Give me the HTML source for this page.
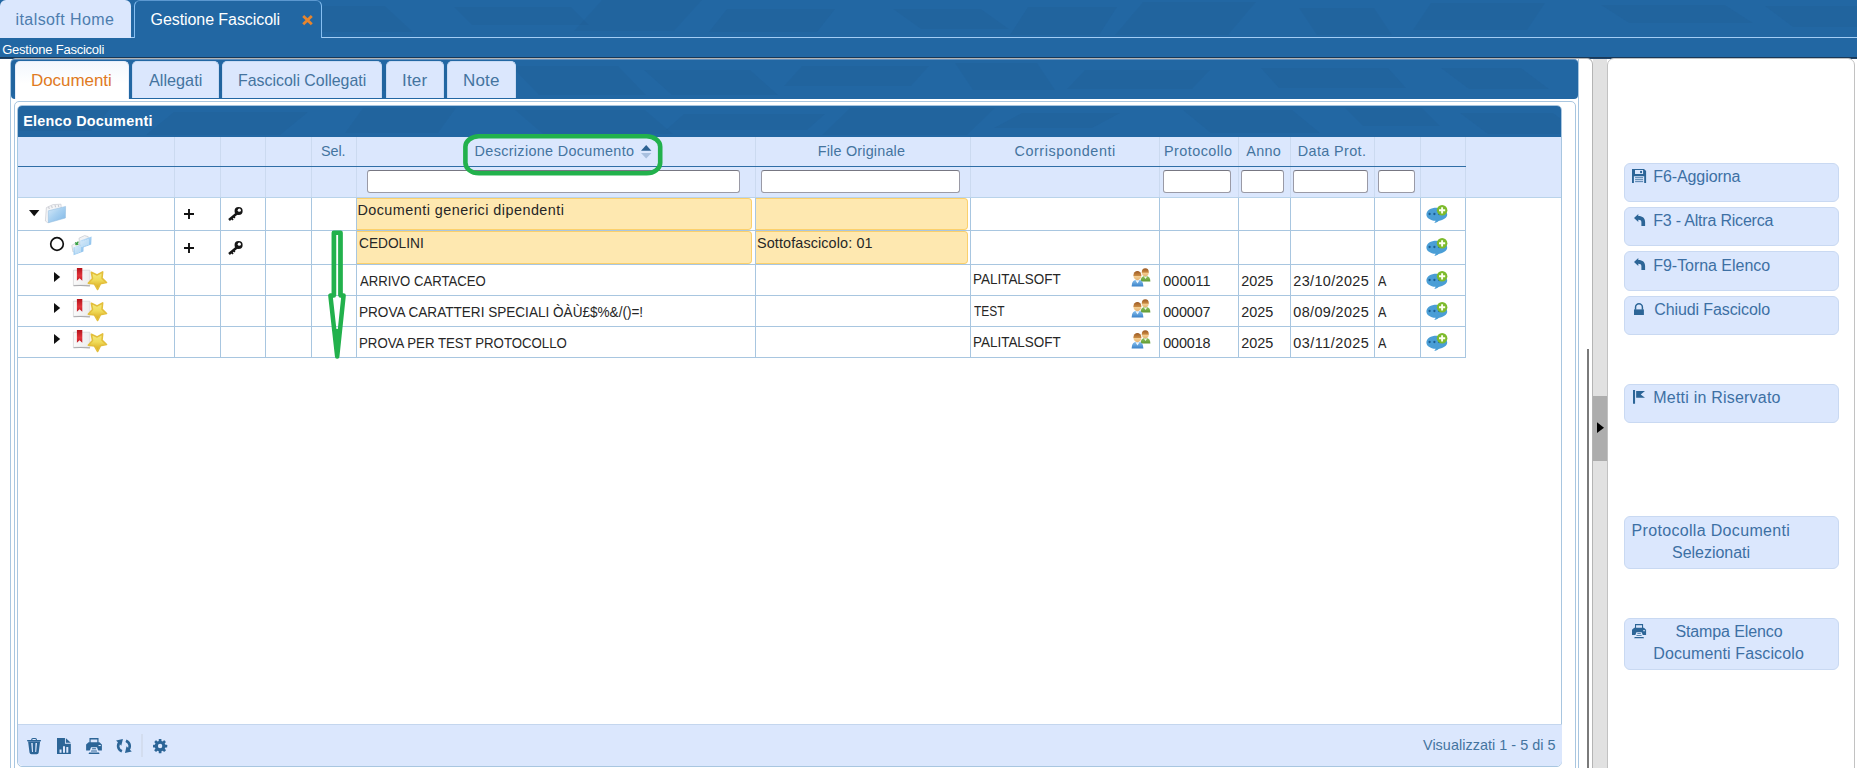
<!DOCTYPE html>
<html lang="it">
<head>
<meta charset="utf-8">
<title>Gestione Fascicoli</title>
<style>
html,body{margin:0;padding:0;}
body{width:1857px;height:768px;overflow:hidden;background:#fff;position:relative;
 font-family:"Liberation Sans",sans-serif;font-size:14.4px;}
.abs,.t,svg.i{position:absolute;}
.t{white-space:nowrap;display:block;}
svg.i{overflow:visible;}
#hdr{left:0;top:0;width:1857px;height:57px;background:#2267a3;}
#hdr-shadow{left:0;top:57px;width:1857px;height:2px;background:linear-gradient(#15324f,#244a70);}
.toptab{box-sizing:border-box;border-radius:6px 6px 0 0;}
#tab-home{left:0;top:0;width:131px;height:38px;background:#dbe7fd;}
#tab-active{left:134px;top:0;width:188px;height:38px;border:1px solid #86bff2;border-top-color:#5c98d0;border-bottom:0;background:#2267a3;}
.hline{height:1px;top:37px;background:#a3cdf5;}
#leftpane{left:10px;top:58px;width:1583px;height:720px;box-sizing:border-box;border:1px solid #b4b4b4;border-left-color:#a8c6e0;border-radius:6px;background:#fff;}
#tabswidget{left:11px;top:59px;width:1568px;height:720px;box-sizing:border-box;border-right:1px solid #a8c6e0;}
#tabbar{left:11px;top:59px;width:1567px;height:40px;background:#2267a3;border-radius:4px;box-sizing:border-box;border-top:1px solid #5f8fbf;}
.tab{box-sizing:border-box;top:61px;height:37px;background:#dbe7fd;border-radius:5px 5px 0 0;border:1px solid #c9dbf4;border-bottom:0;}
.tab.on{background:linear-gradient(#f3f7fd,#ffffff 60%);height:38px;border-color:#e7eefb;}
#tabpanel{left:14px;top:101px;width:1562px;height:700px;box-sizing:border-box;border:1px solid #a8c6e0;border-radius:5px;}
#grid{left:17px;top:105px;width:1545px;height:662px;box-sizing:border-box;border:1px solid #a8c6e0;border-radius:5px;overflow:hidden;background:#fff;}
#gtitle{left:18px;top:106px;width:1543px;height:31px;background:#2267a3;border-radius:4px 4px 0 0;}
#ghead{left:18px;top:137px;width:1543px;height:60px;background:#dbe7fd;}
#gheadline{left:18px;top:166px;width:1448px;height:1px;background:#2f6ea6;}
#gbodytop{left:18px;top:197px;width:1543px;height:1px;background:#b9d3ea;}
.hsep{top:137px;width:1px;height:60px;background:#cbdaf0;}
.vsep{top:198px;width:1px;height:160px;background:#a8c6e0;}
.rsep{left:18px;width:1448px;height:1px;background:#a8c6e0;}
.inp{box-sizing:border-box;top:170px;height:23px;background:#fff;border:1px solid #9a9aa6;border-top-color:#777782;border-radius:3px;}
.ycell{box-sizing:border-box;background:#fee8b0;border:1.5px solid #fbd06c;border-left:0;border-radius:0 4px 4px 0;}
#pager{left:18px;top:724px;width:1544px;height:42px;box-sizing:border-box;background:#dbe7fd;border-top:1px solid #c4d6ee;border-radius:0 0 5px 5px;}
#psep{left:141px;top:734px;width:2px;height:23px;background:#d3ddef;}
#scrollline{left:1587px;top:349px;width:2px;height:420px;background:#7a7a7a;}
#splitter{left:1593px;top:59px;width:14px;height:720px;background:#e1e1e1;}
#handle{left:1593px;top:396px;width:14px;height:65px;background:#adadad;}
#rightpane{left:1607px;top:58px;width:248px;height:730px;box-sizing:border-box;border:1px solid #c2c2c2;border-radius:7px;background:#fff;}
.btn{box-sizing:border-box;left:1624px;width:215px;background:#dbe7fd;border:1px solid #c9d9f2;border-radius:6px;}
</style>
</head>
<body>
<div id="hdr" class="abs"></div>
<svg class="i" style="left:0px;top:0px;overflow:hidden" width="1857" height="37"><g fill="#1d3f66" fill-opacity="0.075"><polygon points="0,2 77,2 49,29 -28,29"/><polygon points="130,7 250,7 278,23 158,23"/><polygon points="276,6 385,6 413,32 304,32"/><polygon points="454,7 571,7 589,25 472,25"/><polygon points="602,0 702,0 674,31 574,31"/><polygon points="727,9 835,9 817,32 709,32"/><polygon points="893,9 981,9 1009,29 921,29"/><polygon points="1028,7 1117,7 1099,35 1010,35"/><polygon points="1143,2 1256,2 1228,35 1115,35"/><polygon points="1299,8 1374,8 1392,35 1317,35"/><polygon points="1431,3 1545,3 1527,30 1413,30"/><polygon points="1601,5 1725,5 1753,23 1629,23"/><polygon points="1765,6 1876,6 1904,27 1793,27"/></g></svg>
<div id="hdr-shadow" class="abs"></div>
<div class="abs hline" style="left:131px;width:4px"></div><div class="abs hline" style="left:321px;width:1536px"></div>
<div id="tab-home" class="abs toptab"></div><span class="t " style="left:15.50px;top:8.96px;font-size:16px;line-height:21px;color:#4d7dae;letter-spacing:0.419px;">italsoft Home</span>
<div id="tab-active" class="abs toptab"></div><span class="t " style="left:150.50px;top:8.96px;font-size:16px;line-height:21px;color:#ffffff;letter-spacing:-0.068px;">Gestione Fascicoli</span>
<svg class="i" style="left:302.00px;top:14.75px" width="11" height="10.4"><path d="M1.2 1.1L9.8 9.3M9.8 1.1L1.2 9.3" stroke="#e8852d" stroke-width="2.8" fill="none"/></svg>
<span class="t " style="left:2.20px;top:40.60px;font-size:13px;line-height:17px;color:#ffffff;letter-spacing:-0.237px;">Gestione Fascicoli</span>
<div id="leftpane" class="abs"></div>
<div id="rightpane" class="abs"></div>
<div id="splitter" class="abs"></div><div id="handle" class="abs"></div>
<svg class="i" style="left:1597px;top:422px" width="8" height="12"><polygon points="0,0.3 7,5.7 0,11.1" fill="#000"/></svg>
<div id="scrollline" class="abs"></div>
<div id="tabswidget" class="abs"></div>
<div id="tabbar" class="abs"></div>
<svg class="i" style="left:12px;top:61px;overflow:hidden" width="1565" height="37"><g fill="#1d3f66" fill-opacity="0.075"><polygon points="0,1 67,1 39,33 -28,33"/><polygon points="134,6 233,6 251,30 152,30"/><polygon points="295,9 442,9 424,30 277,30"/><polygon points="499,5 606,5 634,34 527,34"/><polygon points="632,9 738,9 766,34 660,34"/><polygon points="790,5 917,5 899,25 772,25"/><polygon points="943,2 1025,2 1043,29 961,29"/><polygon points="1073,9 1198,9 1180,28 1055,28"/><polygon points="1249,7 1376,7 1394,27 1267,27"/><polygon points="1429,7 1509,7 1537,28 1457,28"/><polygon points="1567,3 1658,3 1686,29 1595,29"/></g></svg>
<div class="abs tab on" style="left:15px;width:113.5px"></div><span class="t " style="left:31.00px;top:70.01px;font-size:17px;line-height:22px;color:#e07a1e;letter-spacing:-0.060px;">Documenti</span>
<div class="abs tab" style="left:132px;width:87px"></div><span class="t " style="left:149.00px;top:70.01px;font-size:17px;line-height:22px;color:#44749f;transform:scaleX(0.9549);transform-origin:0 0;">Allegati</span>
<div class="abs tab" style="left:222px;width:160px"></div><span class="t " style="left:238.06px;top:70.01px;font-size:17px;line-height:22px;color:#44749f;transform:scaleX(0.9363);transform-origin:0 0;">Fascicoli Collegati</span>
<div class="abs tab" style="left:386px;width:58px"></div><span class="t " style="left:402.00px;top:70.01px;font-size:17px;line-height:22px;color:#44749f;letter-spacing:0.200px;">Iter</span>
<div class="abs tab" style="left:447px;width:69px"></div><span class="t " style="left:463.00px;top:70.01px;font-size:17px;line-height:22px;color:#44749f;letter-spacing:0.182px;">Note</span>
<div id="tabpanel" class="abs"></div>
<div id="grid" class="abs"></div>
<div id="gtitle" class="abs"></div>
<svg class="i" style="left:19px;top:107px;overflow:hidden" width="1541" height="30"><g fill="#1d3f66" fill-opacity="0.075"><polygon points="0,3 90,3 72,24 -18,24"/><polygon points="155,5 289,5 261,28 127,28"/><polygon points="344,1 437,1 419,26 326,26"/><polygon points="496,3 626,3 654,27 524,27"/><polygon points="665,7 806,7 788,23 647,23"/><polygon points="831,1 976,1 948,28 803,28"/><polygon points="1003,6 1101,6 1073,21 975,21"/><polygon points="1164,3 1273,3 1301,26 1192,26"/><polygon points="1326,1 1403,1 1421,19 1344,19"/><polygon points="1441,6 1534,6 1562,27 1469,27"/><polygon points="1585,4 1709,4 1737,24 1613,24"/></g></svg>
<span class="t " style="left:23.20px;top:111.51px;font-size:14.4px;line-height:19px;color:#ffffff;letter-spacing:0.251px;font-weight:700;">Elenco Documenti</span>
<div id="ghead" class="abs"></div>
<div class="abs hsep" style="left:174px"></div>
<div class="abs hsep" style="left:220px"></div>
<div class="abs hsep" style="left:265px"></div>
<div class="abs hsep" style="left:311px"></div>
<div class="abs hsep" style="left:356px"></div>
<div class="abs hsep" style="left:755px"></div>
<div class="abs hsep" style="left:970px"></div>
<div class="abs hsep" style="left:1159px"></div>
<div class="abs hsep" style="left:1238px"></div>
<div class="abs hsep" style="left:1290px"></div>
<div class="abs hsep" style="left:1374px"></div>
<div class="abs hsep" style="left:1420px"></div>
<div class="abs hsep" style="left:1465px"></div>
<div id="gheadline" class="abs"></div>
<span class="t " style="left:321.00px;top:141.51px;font-size:14.4px;line-height:19px;color:#44749f;letter-spacing:-0.100px;">Sel.</span>
<span class="t " style="left:474.60px;top:141.51px;font-size:14.4px;line-height:19px;color:#44749f;letter-spacing:0.332px;">Descrizione Documento</span>
<span class="t " style="left:817.75px;top:141.51px;font-size:14.4px;line-height:19px;color:#44749f;letter-spacing:0.190px;">File Originale</span>
<span class="t " style="left:1014.50px;top:141.51px;font-size:14.4px;line-height:19px;color:#44749f;letter-spacing:0.547px;">Corrispondenti</span>
<span class="t " style="left:1164.00px;top:141.51px;font-size:14.4px;line-height:19px;color:#44749f;letter-spacing:0.446px;">Protocollo</span>
<span class="t " style="left:1246.25px;top:141.51px;font-size:14.4px;line-height:19px;color:#44749f;letter-spacing:0.298px;">Anno</span>
<span class="t " style="left:1297.75px;top:141.51px;font-size:14.4px;line-height:19px;color:#44749f;letter-spacing:0.385px;">Data Prot.</span>
<svg class="i" style="left:641px;top:145px" width="11" height="14"><polygon points="5.2,0 10.4,5.7 0,5.7" fill="#2d6293"/><polygon points="0,8 10.4,8 5.2,13.6" fill="#a9c0df"/></svg>
<div class="abs inp" style="left:367px;width:373px"></div>
<div class="abs inp" style="left:761px;width:199px"></div>
<div class="abs inp" style="left:1163px;width:68px"></div>
<div class="abs inp" style="left:1241px;width:43px"></div>
<div class="abs inp" style="left:1293px;width:75px"></div>
<div class="abs inp" style="left:1378px;width:37px"></div>
<div id="gbodytop" class="abs"></div>
<div class="abs vsep" style="left:17px;top:137px;height:221px;background:#a6c9e2"></div>
<div class="abs vsep" style="left:174px"></div>
<div class="abs vsep" style="left:220px"></div>
<div class="abs vsep" style="left:265px"></div>
<div class="abs vsep" style="left:311px"></div>
<div class="abs vsep" style="left:356px"></div>
<div class="abs vsep" style="left:755px"></div>
<div class="abs vsep" style="left:970px"></div>
<div class="abs vsep" style="left:1159px"></div>
<div class="abs vsep" style="left:1238px"></div>
<div class="abs vsep" style="left:1290px"></div>
<div class="abs vsep" style="left:1374px"></div>
<div class="abs vsep" style="left:1420px"></div>
<div class="abs vsep" style="left:1465px"></div>
<div class="abs rsep" style="top:230px"></div>
<div class="abs rsep" style="top:264px"></div>
<div class="abs rsep" style="top:295px"></div>
<div class="abs rsep" style="top:326px"></div>
<div class="abs rsep" style="top:357px"></div>
<div class="abs ycell" style="left:357px;top:197.6px;width:395px;height:32.400000000000006px"></div>
<div class="abs ycell" style="left:756px;top:197.6px;width:212px;height:32.400000000000006px"></div>
<div class="abs ycell" style="left:357px;top:231px;width:395px;height:33px"></div>
<div class="abs ycell" style="left:756px;top:231px;width:212px;height:33px"></div>
<span class="t " style="left:357.40px;top:201.31px;font-size:14.4px;line-height:19px;color:#262626;letter-spacing:0.463px;">Documenti generici dipendenti</span>
<span class="t " style="left:358.60px;top:234.21px;font-size:14.4px;line-height:19px;color:#262626;transform:scaleX(0.9527);transform-origin:0 0;">CEDOLINI</span>
<span class="t " style="left:757.00px;top:234.31px;font-size:14.4px;line-height:19px;color:#262626;letter-spacing:0.112px;">Sottofascicolo: 01</span>
<span class="t " style="left:360.00px;top:271.76px;font-size:14.4px;line-height:19px;color:#262626;transform:scaleX(0.9120);transform-origin:0 0;">ARRIVO CARTACEO</span>
<span class="t " style="left:359.06px;top:302.81px;font-size:14.4px;line-height:19px;color:#262626;transform:scaleX(0.9429);transform-origin:0 0;">PROVA CARATTERI SPECIALI ÒÀÙ£$%&amp;/()=!</span>
<span class="t " style="left:359.08px;top:333.71px;font-size:14.4px;line-height:19px;color:#262626;transform:scaleX(0.9196);transform-origin:0 0;">PROVA PER TEST PROTOCOLLO</span>
<span class="t " style="left:973.31px;top:269.76px;font-size:14.4px;line-height:19px;color:#262626;transform:scaleX(0.9351);transform-origin:0 0;">PALITALSOFT</span>
<span class="t " style="left:974.25px;top:301.51px;font-size:14.4px;line-height:19px;color:#262626;transform:scaleX(0.8314);transform-origin:0 0;">TEST</span>
<span class="t " style="left:973.31px;top:332.71px;font-size:14.4px;line-height:19px;color:#262626;transform:scaleX(0.9351);transform-origin:0 0;">PALITALSOFT</span>
<span class="t " style="left:1163.25px;top:271.76px;font-size:14.4px;line-height:19px;color:#262626;letter-spacing:0.060px;">000011</span>
<span class="t " style="left:1241.25px;top:271.76px;font-size:14.4px;line-height:19px;color:#262626;letter-spacing:-0.003px;">2025</span>
<span class="t " style="left:1293.25px;top:271.76px;font-size:14.4px;line-height:19px;color:#262626;letter-spacing:0.387px;">23/10/2025</span>
<span class="t " style="left:1378.00px;top:271.76px;font-size:14.4px;line-height:19px;color:#262626;transform:scaleX(0.8750);transform-origin:0 0;">A</span>
<span class="t " style="left:1163.25px;top:302.86px;font-size:14.4px;line-height:19px;color:#262626;letter-spacing:-0.153px;">000007</span>
<span class="t " style="left:1241.25px;top:302.86px;font-size:14.4px;line-height:19px;color:#262626;letter-spacing:-0.003px;">2025</span>
<span class="t " style="left:1293.25px;top:302.86px;font-size:14.4px;line-height:19px;color:#262626;letter-spacing:0.387px;">08/09/2025</span>
<span class="t " style="left:1378.00px;top:302.86px;font-size:14.4px;line-height:19px;color:#262626;transform:scaleX(0.8750);transform-origin:0 0;">A</span>
<span class="t " style="left:1163.25px;top:333.96px;font-size:14.4px;line-height:19px;color:#262626;letter-spacing:-0.153px;">000018</span>
<span class="t " style="left:1241.25px;top:333.96px;font-size:14.4px;line-height:19px;color:#262626;letter-spacing:-0.003px;">2025</span>
<span class="t " style="left:1293.25px;top:333.96px;font-size:14.4px;line-height:19px;color:#262626;letter-spacing:0.505px;">03/11/2025</span>
<span class="t " style="left:1378.00px;top:333.96px;font-size:14.4px;line-height:19px;color:#262626;transform:scaleX(0.8750);transform-origin:0 0;">A</span>
<svg class="i" style="left:29px;top:210px" width="11" height="7"><polygon points="0,0 10.4,0 5.2,6.2" fill="#111"/></svg>
<svg class="i" style="left:45.00px;top:203.50px" width="21" height="19.5"><defs><linearGradient id="g1" x1="0" y1="0" x2="1" y2="1"><stop offset="0" stop-color="#d9ebf9"/><stop offset="0.45" stop-color="#a9d1f1"/><stop offset="1" stop-color="#7fb7e6"/></linearGradient></defs><path d="M1.4 3.6L8 0.6L16 0.2L16.6 12.5L2.6 18.6L0.4 17Z" fill="#f4f5f7" stroke="#c9ccd2" stroke-width="0.7"/><path d="M3.6 2.8L4.3 5M6.6 1.8L7.2 4M10 1L10.6 3.3M13.2 0.8L13.8 3" stroke="#b9bcc4" stroke-width="0.8"/><path d="M3.3 6.8L20.6 2.4L20.4 14L3.4 18.8Z" fill="url(#g1)" stroke="#8fb9dd" stroke-width="0.5"/></svg>
<svg class="i" style="left:49px;top:236px" width="16" height="16"><circle cx="8" cy="8" r="6.3" fill="#fff" stroke="#111" stroke-width="1.7"/></svg>
<svg class="i" style="left:70.50px;top:235.00px" width="21" height="20.5"><defs><linearGradient id="g2" x1="0" y1="0" x2="1" y2="1"><stop offset="0" stop-color="#d4e9fa"/><stop offset="0.5" stop-color="#a3cff2"/><stop offset="1" stop-color="#86bdea"/></linearGradient></defs><path d="M8 3.2L13.6 0.6L17.2 1.6L17.6 9L9 12.4Z" fill="#f2f3f5" stroke="#c4c8cf" stroke-width="0.7"/><path d="M9.2 5.4L20.6 1.6L20.2 9.6L9.6 13.4Z" fill="url(#g2)"/><path d="M0.8 10.4L5.2 7.6L8.2 8.4L8.2 14L2 17Z" fill="#f2f3f5" stroke="#c4c8cf" stroke-width="0.7"/><path d="M2.2 12.6L12.8 8.8L12.4 16.4L2.6 20.2Z" fill="url(#g2)"/><path d="M4.2 7.4L7.2 9.8M7.4 6.6L4.6 10" stroke="#2f9e3a" stroke-width="1.3"/><path d="M11 6.2V12M13 5.5V11.4M15 4.8V10.6M17 4.1V9.9M5 12V18.6M7 11.3V17.9M9 10.6V17.2" stroke="#f1f8fe" stroke-width="0.9" opacity="0.9"/></svg>
<svg class="i" style="left:54px;top:272.0px" width="7" height="11"><polygon points="0,0 6.2,5 0,10" fill="#111"/></svg>
<svg class="i" style="left:73.00px;top:268.00px" width="35" height="24.5"><defs><linearGradient id="g3" x1="0" y1="0" x2="0" y2="1"><stop offset="0" stop-color="#f3ec86"/><stop offset="0.45" stop-color="#f0dc5a"/><stop offset="1" stop-color="#d9a416"/></linearGradient><linearGradient id="g4" x1="0" y1="0" x2="1" y2="0"><stop offset="0" stop-color="#fafafa"/><stop offset="1" stop-color="#ededee"/></linearGradient><linearGradient id="g5" x1="0" y1="0" x2="0" y2="1"><stop offset="0" stop-color="#b3121a"/><stop offset="0.6" stop-color="#e2343c"/><stop offset="1" stop-color="#c01a22"/></linearGradient></defs><path d="M0.4 2.2H16.9V17.4Q8 16.8 0.4 17.4Z" fill="url(#g4)" stroke="#d2d2d4" stroke-width="0.7"/><path d="M0.5 17.7Q8.6 17.1 16.9 17.9" stroke="#a9a9ac" stroke-width="1.1" fill="none"/><path d="M3.9 0H9.3V12.8L6.6 10.2L3.9 12.8Z" fill="url(#g5)"/><polygon points="24.64,21.49 21.50,16.05 15.28,15.18 19.49,10.52 18.39,4.34 24.13,6.90 29.67,3.94 29.00,10.19 33.53,14.55 27.38,15.84" fill="url(#g3)" stroke="#e3bf3c" stroke-width="1.6" stroke-linejoin="round"/></svg>
<svg class="i" style="left:1130.50px;top:268.00px" width="20" height="19"><defs><linearGradient id="g6" x1="0" y1="0" x2="0" y2="1"><stop offset="0" stop-color="#8cc4f0"/><stop offset="1" stop-color="#3b82c8"/></linearGradient><linearGradient id="g7" x1="0" y1="0" x2="0" y2="1"><stop offset="0" stop-color="#8fc15c"/><stop offset="1" stop-color="#5f9a32"/></linearGradient><linearGradient id="g8" x1="0" y1="0" x2="0" y2="1"><stop offset="0" stop-color="#9c5a24"/><stop offset="0.5" stop-color="#c98a42"/><stop offset="0.58" stop-color="#f3cf94"/><stop offset="1" stop-color="#e6b372"/></linearGradient></defs><path d="M9.6 13.4Q9.6 8 14.5 8Q19.4 8 19.4 13.4Z" fill="url(#g7)"/><path d="M12.8 8.6L14.5 11L16.2 8.6Z" fill="#f2f6ee"/><ellipse cx="14.3" cy="4.3" rx="3.5" ry="4" fill="url(#g8)"/><path d="M0.6 18.4Q0.6 11.6 6.5 11.6Q12.4 11.6 12.4 18.4Z" fill="url(#g6)"/><path d="M4.4 12.2L6.5 15.4L8.6 12.2Z" fill="#f0f6fc"/><ellipse cx="6.4" cy="7.6" rx="4" ry="4.6" fill="url(#g8)"/></svg>
<svg class="i" style="left:54px;top:303.1px" width="7" height="11"><polygon points="0,0 6.2,5 0,10" fill="#111"/></svg>
<svg class="i" style="left:73.00px;top:299.05px" width="35" height="24.5"><defs><linearGradient id="g9" x1="0" y1="0" x2="0" y2="1"><stop offset="0" stop-color="#f3ec86"/><stop offset="0.45" stop-color="#f0dc5a"/><stop offset="1" stop-color="#d9a416"/></linearGradient><linearGradient id="g10" x1="0" y1="0" x2="1" y2="0"><stop offset="0" stop-color="#fafafa"/><stop offset="1" stop-color="#ededee"/></linearGradient><linearGradient id="g11" x1="0" y1="0" x2="0" y2="1"><stop offset="0" stop-color="#b3121a"/><stop offset="0.6" stop-color="#e2343c"/><stop offset="1" stop-color="#c01a22"/></linearGradient></defs><path d="M0.4 2.2H16.9V17.4Q8 16.8 0.4 17.4Z" fill="url(#g10)" stroke="#d2d2d4" stroke-width="0.7"/><path d="M0.5 17.7Q8.6 17.1 16.9 17.9" stroke="#a9a9ac" stroke-width="1.1" fill="none"/><path d="M3.9 0H9.3V12.8L6.6 10.2L3.9 12.8Z" fill="url(#g11)"/><polygon points="24.64,21.49 21.50,16.05 15.28,15.18 19.49,10.52 18.39,4.34 24.13,6.90 29.67,3.94 29.00,10.19 33.53,14.55 27.38,15.84" fill="url(#g9)" stroke="#e3bf3c" stroke-width="1.6" stroke-linejoin="round"/></svg>
<svg class="i" style="left:1130.50px;top:299.05px" width="20" height="19"><defs><linearGradient id="g12" x1="0" y1="0" x2="0" y2="1"><stop offset="0" stop-color="#8cc4f0"/><stop offset="1" stop-color="#3b82c8"/></linearGradient><linearGradient id="g13" x1="0" y1="0" x2="0" y2="1"><stop offset="0" stop-color="#8fc15c"/><stop offset="1" stop-color="#5f9a32"/></linearGradient><linearGradient id="g14" x1="0" y1="0" x2="0" y2="1"><stop offset="0" stop-color="#9c5a24"/><stop offset="0.5" stop-color="#c98a42"/><stop offset="0.58" stop-color="#f3cf94"/><stop offset="1" stop-color="#e6b372"/></linearGradient></defs><path d="M9.6 13.4Q9.6 8 14.5 8Q19.4 8 19.4 13.4Z" fill="url(#g13)"/><path d="M12.8 8.6L14.5 11L16.2 8.6Z" fill="#f2f6ee"/><ellipse cx="14.3" cy="4.3" rx="3.5" ry="4" fill="url(#g14)"/><path d="M0.6 18.4Q0.6 11.6 6.5 11.6Q12.4 11.6 12.4 18.4Z" fill="url(#g12)"/><path d="M4.4 12.2L6.5 15.4L8.6 12.2Z" fill="#f0f6fc"/><ellipse cx="6.4" cy="7.6" rx="4" ry="4.6" fill="url(#g14)"/></svg>
<svg class="i" style="left:54px;top:334.1px" width="7" height="11"><polygon points="0,0 6.2,5 0,10" fill="#111"/></svg>
<svg class="i" style="left:73.00px;top:330.10px" width="35" height="24.5"><defs><linearGradient id="g15" x1="0" y1="0" x2="0" y2="1"><stop offset="0" stop-color="#f3ec86"/><stop offset="0.45" stop-color="#f0dc5a"/><stop offset="1" stop-color="#d9a416"/></linearGradient><linearGradient id="g16" x1="0" y1="0" x2="1" y2="0"><stop offset="0" stop-color="#fafafa"/><stop offset="1" stop-color="#ededee"/></linearGradient><linearGradient id="g17" x1="0" y1="0" x2="0" y2="1"><stop offset="0" stop-color="#b3121a"/><stop offset="0.6" stop-color="#e2343c"/><stop offset="1" stop-color="#c01a22"/></linearGradient></defs><path d="M0.4 2.2H16.9V17.4Q8 16.8 0.4 17.4Z" fill="url(#g16)" stroke="#d2d2d4" stroke-width="0.7"/><path d="M0.5 17.7Q8.6 17.1 16.9 17.9" stroke="#a9a9ac" stroke-width="1.1" fill="none"/><path d="M3.9 0H9.3V12.8L6.6 10.2L3.9 12.8Z" fill="url(#g17)"/><polygon points="24.64,21.49 21.50,16.05 15.28,15.18 19.49,10.52 18.39,4.34 24.13,6.90 29.67,3.94 29.00,10.19 33.53,14.55 27.38,15.84" fill="url(#g15)" stroke="#e3bf3c" stroke-width="1.6" stroke-linejoin="round"/></svg>
<svg class="i" style="left:1130.50px;top:330.10px" width="20" height="19"><defs><linearGradient id="g18" x1="0" y1="0" x2="0" y2="1"><stop offset="0" stop-color="#8cc4f0"/><stop offset="1" stop-color="#3b82c8"/></linearGradient><linearGradient id="g19" x1="0" y1="0" x2="0" y2="1"><stop offset="0" stop-color="#8fc15c"/><stop offset="1" stop-color="#5f9a32"/></linearGradient><linearGradient id="g20" x1="0" y1="0" x2="0" y2="1"><stop offset="0" stop-color="#9c5a24"/><stop offset="0.5" stop-color="#c98a42"/><stop offset="0.58" stop-color="#f3cf94"/><stop offset="1" stop-color="#e6b372"/></linearGradient></defs><path d="M9.6 13.4Q9.6 8 14.5 8Q19.4 8 19.4 13.4Z" fill="url(#g19)"/><path d="M12.8 8.6L14.5 11L16.2 8.6Z" fill="#f2f6ee"/><ellipse cx="14.3" cy="4.3" rx="3.5" ry="4" fill="url(#g20)"/><path d="M0.6 18.4Q0.6 11.6 6.5 11.6Q12.4 11.6 12.4 18.4Z" fill="url(#g18)"/><path d="M4.4 12.2L6.5 15.4L8.6 12.2Z" fill="#f0f6fc"/><ellipse cx="6.4" cy="7.6" rx="4" ry="4.6" fill="url(#g20)"/></svg>
<svg class="i" style="left:184px;top:209px" width="10" height="10"><path d="M5 0V10M0 5H10" stroke="#111" stroke-width="1.9" fill="none"/></svg>
<svg class="i" style="left:227.60px;top:206.90px" width="14.6" height="14.1"><path d="M9.4 6L1 13" stroke="#161616" stroke-width="2.5" fill="none"/><path d="M3.6 11.2L5 13M5.6 9.6L6.8 11.1" stroke="#161616" stroke-width="1.6" fill="none"/><circle cx="10.6" cy="4.05" r="4.05" fill="#161616"/><circle cx="11.3" cy="3.2" r="1.6" fill="#fff"/></svg>
<svg class="i" style="left:184px;top:243px" width="10" height="10"><path d="M5 0V10M0 5H10" stroke="#111" stroke-width="1.9" fill="none"/></svg>
<svg class="i" style="left:227.60px;top:240.90px" width="14.6" height="14.1"><path d="M9.4 6L1 13" stroke="#161616" stroke-width="2.5" fill="none"/><path d="M3.6 11.2L5 13M5.6 9.6L6.8 11.1" stroke="#161616" stroke-width="1.6" fill="none"/><circle cx="10.6" cy="4.05" r="4.05" fill="#161616"/><circle cx="11.3" cy="3.2" r="1.6" fill="#fff"/></svg>
<svg class="i" style="left:1425.50px;top:204.70px" width="22" height="18"><path d="M0.4 9.4C0.4 5.4 4.8 2.8 10.6 2.8C16.6 2.8 21.2 5.6 21.2 9.6C21.2 12.8 17.6 15.2 12.6 15.9C11.6 17 10 17.8 8.2 17.8C9 17.2 9.5 16.6 9.6 15.8C4.2 15.4 0.4 12.8 0.4 9.4Z" fill="#4a9ed6"/><circle cx="3.6" cy="9" r="1.15" fill="#1c5f93"/><circle cx="8.4" cy="9" r="1.15" fill="#1c5f93"/><circle cx="13.2" cy="9" r="1.15" fill="#1c5f93"/><circle cx="16.1" cy="5.3" r="5.3" fill="#7dbb2c"/><path d="M16.1 2.2V8.4M13 5.3H19.2" stroke="#fdfff0" stroke-width="1.9" fill="none"/></svg>
<svg class="i" style="left:1425.50px;top:238.45px" width="22" height="18"><path d="M0.4 9.4C0.4 5.4 4.8 2.8 10.6 2.8C16.6 2.8 21.2 5.6 21.2 9.6C21.2 12.8 17.6 15.2 12.6 15.9C11.6 17 10 17.8 8.2 17.8C9 17.2 9.5 16.6 9.6 15.8C4.2 15.4 0.4 12.8 0.4 9.4Z" fill="#4a9ed6"/><circle cx="3.6" cy="9" r="1.15" fill="#1c5f93"/><circle cx="8.4" cy="9" r="1.15" fill="#1c5f93"/><circle cx="13.2" cy="9" r="1.15" fill="#1c5f93"/><circle cx="16.1" cy="5.3" r="5.3" fill="#7dbb2c"/><path d="M16.1 2.2V8.4M13 5.3H19.2" stroke="#fdfff0" stroke-width="1.9" fill="none"/></svg>
<svg class="i" style="left:1425.50px;top:270.55px" width="22" height="18"><path d="M0.4 9.4C0.4 5.4 4.8 2.8 10.6 2.8C16.6 2.8 21.2 5.6 21.2 9.6C21.2 12.8 17.6 15.2 12.6 15.9C11.6 17 10 17.8 8.2 17.8C9 17.2 9.5 16.6 9.6 15.8C4.2 15.4 0.4 12.8 0.4 9.4Z" fill="#4a9ed6"/><circle cx="3.6" cy="9" r="1.15" fill="#1c5f93"/><circle cx="8.4" cy="9" r="1.15" fill="#1c5f93"/><circle cx="13.2" cy="9" r="1.15" fill="#1c5f93"/><circle cx="16.1" cy="5.3" r="5.3" fill="#7dbb2c"/><path d="M16.1 2.2V8.4M13 5.3H19.2" stroke="#fdfff0" stroke-width="1.9" fill="none"/></svg>
<svg class="i" style="left:1425.50px;top:301.55px" width="22" height="18"><path d="M0.4 9.4C0.4 5.4 4.8 2.8 10.6 2.8C16.6 2.8 21.2 5.6 21.2 9.6C21.2 12.8 17.6 15.2 12.6 15.9C11.6 17 10 17.8 8.2 17.8C9 17.2 9.5 16.6 9.6 15.8C4.2 15.4 0.4 12.8 0.4 9.4Z" fill="#4a9ed6"/><circle cx="3.6" cy="9" r="1.15" fill="#1c5f93"/><circle cx="8.4" cy="9" r="1.15" fill="#1c5f93"/><circle cx="13.2" cy="9" r="1.15" fill="#1c5f93"/><circle cx="16.1" cy="5.3" r="5.3" fill="#7dbb2c"/><path d="M16.1 2.2V8.4M13 5.3H19.2" stroke="#fdfff0" stroke-width="1.9" fill="none"/></svg>
<svg class="i" style="left:1425.50px;top:332.55px" width="22" height="18"><path d="M0.4 9.4C0.4 5.4 4.8 2.8 10.6 2.8C16.6 2.8 21.2 5.6 21.2 9.6C21.2 12.8 17.6 15.2 12.6 15.9C11.6 17 10 17.8 8.2 17.8C9 17.2 9.5 16.6 9.6 15.8C4.2 15.4 0.4 12.8 0.4 9.4Z" fill="#4a9ed6"/><circle cx="3.6" cy="9" r="1.15" fill="#1c5f93"/><circle cx="8.4" cy="9" r="1.15" fill="#1c5f93"/><circle cx="13.2" cy="9" r="1.15" fill="#1c5f93"/><circle cx="16.1" cy="5.3" r="5.3" fill="#7dbb2c"/><path d="M16.1 2.2V8.4M13 5.3H19.2" stroke="#fdfff0" stroke-width="1.9" fill="none"/></svg>
<svg class="i" style="left:455px;top:128px" width="220" height="56"><rect x="10.4" y="8.3" width="194.8" height="37" rx="13.5" ry="10.5" fill="none" stroke="#22b14c" stroke-width="4.6"/></svg>
<svg class="i" style="left:320px;top:225px" width="40" height="140"><path d="M13.8 7.8H20.6V70.6H23.6L17.2 131.5L10.4 70.6H13.8Z" fill="#fff" fill-opacity="0" stroke="#22b14c" stroke-width="4.5" stroke-linejoin="round"/><path d="M15.6 8V71" stroke="#22b14c" stroke-width="1.2"/><path d="M18.9 8V71" stroke="#22b14c" stroke-width="1.2"/><path d="M14.5 104L17.2 131L19.9 104Z" fill="#22b14c"/></svg>
<div id="pager" class="abs"></div><div id="psep" class="abs"></div>
<svg class="i" style="left:26.90px;top:737.80px" width="14.1" height="16.2"><path d="M4.75 2.3V1.7Q4.75 0.55 5.9 0.55H8.3Q9.45 0.55 9.45 1.7V2.3" stroke="#2c6597" stroke-width="1.1" fill="none"/><path fill="#2c6597" d="M0 2H14.1L13.6 3.6H0.5Z"/><path fill-rule="evenodd" fill="#2c6597" d="M1.1 3.5H13.1L11.7 14.4Q11.5 16.2 9.7 16.2H4.5Q2.7 16.2 2.5 14.4ZM4.2 5.1L5 14H6L5.7 5.1Z M8.5 5.1L8.2 14H9.2L10 5.1Z"/></svg>
<svg class="i" style="left:57.00px;top:738.00px" width="13.9" height="16.1"><path fill-rule="evenodd" fill="#2c6597" d="M0 0H7.95V5.85H13.85V16.05H0ZM2.55 11.5V14.8H4.55V11.5Z M6 8.2V14.8H8V8.2Z M9.3 9.1V14.8H11.3V9.1Z"/><path fill="#2c6597" d="M8.9 0.2L13.85 4.8H8.9Z"/></svg>
<svg class="i" style="left:86.00px;top:738.00px" width="16" height="15.9" viewBox="0 0 14.1 14.2"><path fill-rule="evenodd" fill="#2c6597" d="M3 0H11.1V4.4H3Z M4.05 1.35V4.4H10V1.35Z"/><path fill="#2c6597" d="M2.2 3.7H11.9L14.1 5.7V11.1H0V5.7Z"/><rect x="11.1" y="6.25" width="2" height="0.95" fill="#dde9fd"/><path fill="#dde9fd" d="M4.4 8.3H9.7L12 14.2H2.2Z"/><path fill="#2c6597" d="M5.5 9.2H8.7L8.95 10H5.25Z M4.6 11.25H9.5L9.8 12.05H4.3Z M2.7 13H11.5L12 14.2H2.2Z"/></svg>
<svg class="i" style="left:116.10px;top:738.90px" width="15.9" height="14.1"><path fill="none" stroke="#2c6597" stroke-width="2.6" d="M5.9 12.3C1.5 10.4 0.9 5.6 4.3 2.4"/><path fill="#2c6597" d="M0.1 1.6L6.9 0.1L5.3 6.8Z"/><g transform="rotate(180 7.93 7.05)"><path fill="none" stroke="#2c6597" stroke-width="2.6" d="M5.9 12.3C1.5 10.4 0.9 5.6 4.3 2.4"/><path fill="#2c6597" d="M0.1 1.6L6.9 0.1L5.3 6.8Z"/></g></svg>
<svg class="i" style="left:152.98px;top:738.90px" width="14.2" height="14.1"><g transform="translate(7.1,7.05)"><rect x="-1.35" y="-7.1" width="2.7" height="2.8" rx="0.5" transform="rotate(0)" fill="#2c6597"/><rect x="-1.35" y="-7.1" width="2.7" height="2.8" rx="0.5" transform="rotate(45)" fill="#2c6597"/><rect x="-1.35" y="-7.1" width="2.7" height="2.8" rx="0.5" transform="rotate(90)" fill="#2c6597"/><rect x="-1.35" y="-7.1" width="2.7" height="2.8" rx="0.5" transform="rotate(135)" fill="#2c6597"/><rect x="-1.35" y="-7.1" width="2.7" height="2.8" rx="0.5" transform="rotate(180)" fill="#2c6597"/><rect x="-1.35" y="-7.1" width="2.7" height="2.8" rx="0.5" transform="rotate(225)" fill="#2c6597"/><rect x="-1.35" y="-7.1" width="2.7" height="2.8" rx="0.5" transform="rotate(270)" fill="#2c6597"/><rect x="-1.35" y="-7.1" width="2.7" height="2.8" rx="0.5" transform="rotate(315)" fill="#2c6597"/><circle r="3.8" fill="none" stroke="#2c6597" stroke-width="3.2"/></g></svg>
<span class="t " style="left:1423.00px;top:736.01px;font-size:14.4px;line-height:19px;color:#44749f;letter-spacing:0.040px;">Visualizzati 1 - 5 di 5</span>
<div class="abs btn" style="top:163px;height:39px"></div><svg class="i" style="left:1631.90px;top:168.80px" width="14.1" height="14.1"><path fill-rule="evenodd" fill="#2c6597" d="M0 0H12L14.1 2.1V14.1H0ZM3 1.1V5H11.1V1.1Z M1.9 7.2V14.1H12.2V7.2Z"/><rect x="8.1" y="1.9" width="1.9" height="2.2" fill="#2c6597"/><path d="M3.1 8.7H11.1M3.1 10.7H11.1M3.1 12.65H11.1" stroke="#2c6597" stroke-width="0.8" fill="none"/></svg><span class="t " style="left:1653.25px;top:165.76px;font-size:16px;line-height:21px;color:#3d70a4;letter-spacing:-0.090px;">F6-Aggiorna</span>
<div class="abs btn" style="top:207px;height:39px"></div><svg class="i" style="left:1633.80px;top:213.70px" width="11.2" height="12"><path fill="#2c6597" d="M0 4.1L4.3 0V2C8.7 2 11.1 4.3 11.1 8.1V11.9H7.4V8.3C7.4 6.5 6.4 5.8 4.3 5.8V8.1Z"/></svg><span class="t " style="left:1653.25px;top:209.76px;font-size:16px;line-height:21px;color:#3d70a4;letter-spacing:-0.201px;">F3 - Altra Ricerca</span>
<div class="abs btn" style="top:251px;height:39.60000000000002px"></div><svg class="i" style="left:1633.80px;top:257.90px" width="11.2" height="12"><path fill="#2c6597" d="M0 4.1L4.3 0V2C8.7 2 11.1 4.3 11.1 8.1V11.9H7.4V8.3C7.4 6.5 6.4 5.8 4.3 5.8V8.1Z"/></svg><span class="t " style="left:1653.25px;top:254.66px;font-size:16px;line-height:21px;color:#3d70a4;letter-spacing:-0.039px;">F9-Torna Elenco</span>
<div class="abs btn" style="top:296px;height:39px"></div><svg class="i" style="left:1634.05px;top:302.90px" width="10" height="12"><rect x="0" y="6.4" width="9.9" height="5.6" fill="#2c6597"/><path d="M1.55 6.8V4.1A3.42 3.42 0 0 1 8.4 4.1V6.8" stroke="#2c6597" stroke-width="1.45" fill="none"/></svg><span class="t " style="left:1654.25px;top:298.66px;font-size:16px;line-height:21px;color:#3d70a4;letter-spacing:-0.102px;">Chiudi Fascicolo</span>
<div class="abs btn" style="top:384px;height:39px"></div><svg class="i" style="left:1633.00px;top:390.10px" width="12.5" height="14"><rect x="0" y="0" width="2.05" height="13.75" fill="#2c6597"/><path fill="#2c6597" d="M3.15 1.1H12L7.7 4.4L12 7.7H3.15Z"/></svg><span class="t " style="left:1653.25px;top:386.96px;font-size:16px;line-height:21px;color:#3d70a4;letter-spacing:0.215px;">Metti in Riservato</span>
<div class="abs btn" style="top:516px;height:52.60000000000002px"></div><span class="t " style="left:1631.50px;top:519.66px;font-size:16px;line-height:21px;color:#3d70a4;letter-spacing:0.331px;">Protocolla Documenti</span><span class="t " style="left:1672.00px;top:541.76px;font-size:16px;line-height:21px;color:#3d70a4;letter-spacing:-0.022px;">Selezionati</span>
<div class="abs btn" style="top:618px;height:52px"></div><svg class="i" style="left:1631.90px;top:623.80px" width="14.1" height="14.2" viewBox="0 0 14.1 14.2"><path fill-rule="evenodd" fill="#2c6597" d="M3 0H11.1V4.4H3Z M4.05 1.35V4.4H10V1.35Z"/><path fill="#2c6597" d="M2.2 3.7H11.9L14.1 5.7V11.1H0V5.7Z"/><rect x="11.1" y="6.25" width="2" height="0.95" fill="#dde9fd"/><path fill="#dde9fd" d="M4.4 8.3H9.7L12 14.2H2.2Z"/><path fill="#2c6597" d="M5.5 9.2H8.7L8.95 10H5.25Z M4.6 11.25H9.5L9.8 12.05H4.3Z M2.7 13H11.5L12 14.2H2.2Z"/></svg><span class="t " style="left:1675.40px;top:620.66px;font-size:16px;line-height:21px;color:#3d70a4;letter-spacing:-0.109px;">Stampa Elenco</span><span class="t " style="left:1653.25px;top:642.76px;font-size:16px;line-height:21px;color:#3d70a4;letter-spacing:0.114px;">Documenti Fascicolo</span>
</body>
</html>
